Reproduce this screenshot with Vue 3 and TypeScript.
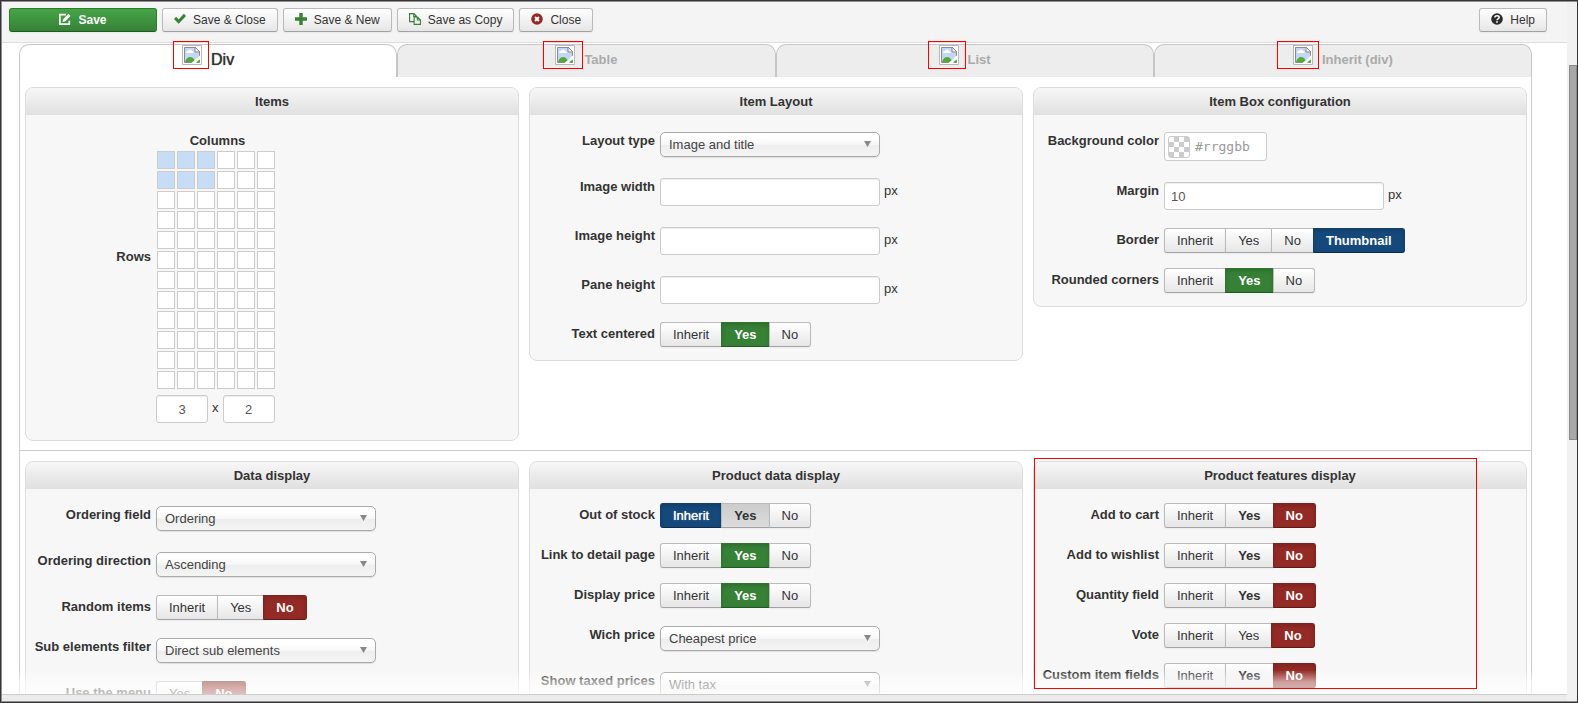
<script setup lang="ts">
import { reactive, ref } from 'vue'

type Kind = 'toggle' | 'select' | 'text' | 'color'
interface Field {
  id: string
  label: string
  kind: Kind
  options?: string[]
  value: string
  /** Options whose caption is printed in bold while not necessarily chosen */
  bold?: string[]
  /** Options drawn in the pressed grey state */
  pressed?: string[]
}
interface Panel {
  title: string
  marked?: boolean
  fields: Field[]
}

const iyn = ['Inherit', 'Yes', 'No']

const tabs = [
  { name: 'Div', left: 9, right: 7 },
  { name: 'Table', left: 12, right: 8 },
  { name: 'List', left: 11, right: 7 },
  { name: 'Inherit (div)', left: 16, right: 6 },
]
const activeTab = ref('Div')

const columns = ref(3)
const rows = ref(2)
const gridColumns = 6
const gridRows = 12

const upper = reactive<Panel[]>([
  {
    title: 'Item Layout',
    fields: [
      { id: 'layout', label: 'Layout type', kind: 'select', options: ['Image and title', 'Title', 'Image'], value: 'Image and title' },
      { id: 'imgw', label: 'Image width', kind: 'text', value: '' },
      { id: 'imgh', label: 'Image height', kind: 'text', value: '' },
      { id: 'paneh', label: 'Pane height', kind: 'text', value: '' },
      { id: 'center', label: 'Text centered', kind: 'toggle', options: iyn, value: 'Yes', bold: ['Yes'] },
    ],
  },
  {
    title: 'Item Box configuration',
    fields: [
      { id: 'bg', label: 'Background color', kind: 'color', value: '' },
      { id: 'margin', label: 'Margin', kind: 'text', value: '10' },
      { id: 'border', label: 'Border', kind: 'toggle', options: [...iyn, 'Thumbnail'], value: 'Thumbnail', bold: ['Thumbnail'] },
      { id: 'round', label: 'Rounded corners', kind: 'toggle', options: iyn, value: 'Yes', bold: ['Yes'] },
    ],
  },
])

const lower = reactive<Panel[]>([
  {
    title: 'Data display',
    fields: [
      { id: 'order', label: 'Ordering field', kind: 'select', options: ['Ordering', 'Name', 'Price'], value: 'Ordering' },
      { id: 'dir', label: 'Ordering direction', kind: 'select', options: ['Ascending', 'Descending'], value: 'Ascending' },
      { id: 'random', label: 'Random items', kind: 'toggle', options: iyn, value: 'No', bold: ['No'] },
      { id: 'sub', label: 'Sub elements filter', kind: 'select', options: ['Direct sub elements', 'All sub elements'], value: 'Direct sub elements' },
      { id: 'menu', label: 'Use the menu', kind: 'toggle', options: ['Yes', 'No'], value: 'No', bold: ['No'] },
    ],
  },
  {
    title: 'Product data display',
    fields: [
      { id: 'stock', label: 'Out of stock', kind: 'toggle', options: iyn, value: 'Inherit', bold: ['Yes'], pressed: ['Yes'] },
      { id: 'link', label: 'Link to detail page', kind: 'toggle', options: iyn, value: 'Yes', bold: ['Yes'] },
      { id: 'price', label: 'Display price', kind: 'toggle', options: iyn, value: 'Yes', bold: ['Yes'] },
      { id: 'which', label: 'Wich price', kind: 'select', options: ['Cheapest price', 'Unit price'], value: 'Cheapest price' },
      { id: 'tax', label: 'Show taxed prices', kind: 'select', options: ['With tax', 'Without tax'], value: 'With tax' },
    ],
  },
  {
    title: 'Product features display',
    marked: true,
    fields: [
      { id: 'cart', label: 'Add to cart', kind: 'toggle', options: iyn, value: 'No', bold: ['Yes', 'No'] },
      { id: 'wish', label: 'Add to wishlist', kind: 'toggle', options: iyn, value: 'No', bold: ['Yes', 'No'] },
      { id: 'qty', label: 'Quantity field', kind: 'toggle', options: iyn, value: 'No', bold: ['Yes', 'No'] },
      { id: 'vote', label: 'Vote', kind: 'toggle', options: iyn, value: 'No', bold: ['No'] },
      { id: 'custom', label: 'Custom item fields', kind: 'toggle', options: iyn, value: 'No', bold: ['Yes', 'No'] },
    ],
  },
])

function toneOf(option: string): string {
  if (option === 'Yes') return 'green'
  if (option === 'No') return 'red'
  return 'blue'
}

function optionClass(field: Field, option: string) {
  return [
    field.value === option ? toneOf(option) : '',
    { bold: field.bold?.includes(option), pressed: field.pressed?.includes(option) && field.value !== option },
  ]
}

function isFilled(index: number): boolean {
  const i = index - 1
  return i % gridColumns < columns.value && Math.floor(i / gridColumns) < rows.value
}

function pick(index: number) {
  columns.value = ((index - 1) % gridColumns) + 1
  rows.value = Math.floor((index - 1) / gridColumns) + 1
}
</script>

<template>
  <div class="window">
    <div class="view">
      <header class="toolbar">
        <button type="button" class="btn save">
          <svg viewBox="0 0 14 14"><path d="M12 9v4H1V2h7" fill="none" stroke="#fff" stroke-width="2" /><path d="M4 10.500l1-3.500 6-6 2.500 2.500-6 6z" fill="#fff" /></svg>
          Save
        </button>
        <button type="button" class="btn">
          <svg viewBox="0 0 14 14"><path d="M0 7l2.500-2.500L5.500 7.500 11.500 1 14 3.500 5.500 12.500z" fill="#378137" /></svg>
          Save &amp; Close
        </button>
        <button type="button" class="btn">
          <svg viewBox="0 0 14 14"><path d="M5 0h4v5h5v4H9v5H5V9H0V5h5z" fill="#378137" /></svg>
          Save &amp; New
        </button>
        <button type="button" class="btn">
          <svg viewBox="0 0 14 14"><path d="M5.500 10H.7V.7h5l3 3v1M5.500.7v3.300h3M6 4.700h4l3.300 3.300v5.300H6zM9.700 4.700v3.500h3.500" fill="none" stroke="#378137" stroke-width="1.300" /></svg>
          Save as Copy
        </button>
        <button type="button" class="btn">
          <svg viewBox="0 0 14 14"><circle cx="7" cy="7" r="6.800" fill="#942a25" /><path d="M4.700 4.700l4.600 4.600M9.300 4.700L4.700 9.300" stroke="#fff" stroke-width="2.200" /></svg>
          Close
        </button>
        <button type="button" class="btn help">
          <svg viewBox="0 0 14 14"><circle cx="7" cy="7" r="6.800" fill="#2b2b2b" /><path d="M4.500 5.200C4.500 2.700 9.500 2.700 9.500 5.200C9.500 6.800 7 6.700 7 8.600" fill="none" stroke="#fff" stroke-width="1.800" /><path d="M6 9.600h2v1.800H6z" fill="#fff" /></svg>
          Help
        </button>
      </header>

      <main class="content">
        <nav class="tabs" role="tablist">
          <button
            v-for="tab in tabs"
            :key="tab.name"
            type="button"
            role="tab"
            class="tab"
            :class="{ active: tab.name === activeTab }"
            :aria-selected="tab.name === activeTab"
            @click="activeTab = tab.name"
          >
            <span class="picture">
              <svg viewBox="0 0 20 20">
                <path d="M.5.5h19v19H.5z" fill="#fff" stroke="#b9b9b9" />
                <path d="M2.500 2.500h11l4 4v11h-15z" fill="#c5d7f4" stroke="#8b8b8b" />
                <path d="M4 8c0-2 2-2 2-2 1-2 4-1 4 0 2 0 2 2 1 2z" fill="#fff" />
                <path d="M3 17c2-7 8-6 10-1v1z" fill="#50ab34" />
                <path d="M13 2v5h5z" fill="#eee" stroke="#8b8b8b" />
                <path d="M9 18.500L18.500 10v4L14 18.500z" fill="#fff" />
                <path d="M14 17.500l3.500-3v3z" fill="#50ab34" />
              </svg>
              <span class="mark" :style="{ left: -tab.left + 'px', right: -tab.right + 'px' }"></span>
            </span>
            <span>{{ tab.name }}</span>
          </button>
        </nav>

        <div class="sheet">
          <div class="panels">
            <section class="panel">
              <h2>Items</h2>
              <div class="matrix">
                <span class="caption">Columns</span>
                <span class="side">Rows</span>
                <div class="cells">
                  <button
                    v-for="n in gridColumns * gridRows"
                    :key="n"
                    type="button"
                    class="cell"
                    :class="{ filled: isFilled(n) }"
                    :aria-label="`Cell ${n}`"
                    @click="pick(n)"
                  ></button>
                </div>
                <div class="counts">
                  <input v-model.number="columns" type="text" aria-label="Columns" />
                  <span>x</span>
                  <input v-model.number="rows" type="text" aria-label="Rows" />
                </div>
              </div>
            </section>
            <template v-for="(group, g) in [upper, lower]" :key="g">
              <hr v-if="g === 1" />
              <section v-for="panel in group" :key="panel.title" class="panel">
                <h2>{{ panel.title }}</h2>
                <div class="fields">
                  <div v-for="f in panel.fields" :key="f.id" class="field">
                    <span v-if="f.kind === 'toggle'" :id="f.id" class="label">{{ f.label }}</span>
                    <label v-else class="label" :for="f.id">{{ f.label }}</label>

                    <div v-if="f.kind === 'toggle'" class="toggle" role="group" :aria-labelledby="f.id">
                      <button
                        v-for="o in f.options"
                        :key="o"
                        type="button"
                        :class="optionClass(f, o)"
                        :aria-pressed="f.value === o"
                        @click="f.value = o"
                      >{{ o }}</button>
                    </div>
                    <div v-else-if="f.kind === 'select'" class="select">
                      <select :id="f.id" v-model="f.value">
                        <option v-for="o in f.options" :key="o">{{ o }}</option>
                      </select>
                      <svg viewBox="0 0 8 6"><path d="M1 0h7L4.500 6z" fill="#888" /></svg>
                    </div>
                    <div v-else-if="f.kind === 'text'" class="measure">
                      <input :id="f.id" v-model="f.value" type="text" />
                      <span>px</span>
                    </div>
                    <div v-else class="color">
                      <span class="swatch"></span>
                      <input :id="f.id" v-model="f.value" type="text" placeholder="#rrggbb" />
                    </div>
                  </div>
                </div>
                <span v-if="panel.marked" class="mark region"></span>
              </section>
            </template>
          </div>
        </div>
        <div class="fade"></div>
      </main>

      <footer class="strip"></footer>
    </div>
    <div class="scroll"><div class="thumb"></div></div>
  </div>
</template>

<style>
body {
  margin: 0;
}
</style>

<style scoped>
* {
  box-sizing: border-box;
}

.window {
  display: flex;
  height: 100vh;
  overflow: hidden;
  border: 1px solid #353337;
  box-shadow: inset 1px 1px 0 #8f8f8f, inset 0 -1px 0 #8f8f8f;
  padding: 1px 0 1px 1px;
  background: #fff;
  color: #333;
  font-family: "Liberation Sans", Arial, sans-serif;
  font-size: 13px;
  line-height: 18px;
}

button,
input,
select {
  margin: 0;
  font: inherit;
  color: inherit;
}

button {
  cursor: pointer;
}

.view {
  display: flex;
  flex: 1;
  flex-direction: column;
  min-width: 0;
}

.toolbar {
  display: flex;
  flex: none;
  gap: 5px;
  padding: 6px 20px 10px 7px;
  border-bottom: 1px solid #ddd;
  background: #f4f4f4;
}

.btn {
  display: flex;
  align-items: center;
  justify-content: center;
  gap: 7px;
  height: 24px;
  padding: 0 11px;
  border: 1px solid #bbb;
  border-bottom-color: #a2a2a2;
  border-radius: 3px;
  background: linear-gradient(#fff, #e6e6e6);
  box-shadow: 0 1px 2px rgba(0, 0, 0, 0.05);
  font-size: 12px;
}

.btn svg {
  width: 12px;
  height: 12px;
  margin-bottom: 2px;
}

.btn.save {
  width: 148px;
  border-color: #2f7a2f;
  border-bottom-color: #1f5a1f;
  background: linear-gradient(#46a546, #378137);
  color: #fff;
  font-weight: bold;
}

.btn.help {
  margin-left: auto;
}

.content {
  position: relative;
  flex: 1;
  min-height: 0;
  overflow: hidden;
  margin-top: -2px;
  padding: 3px 35px 0 17px;
}

.tabs {
  display: flex;
}

.tab {
  display: flex;
  flex: 1;
  align-items: flex-start;
  justify-content: center;
  gap: 9px;
  height: 33px;
  padding: 0;
  border: 1px solid #c6c6c6;
  border-bottom: 0;
  border-radius: 10px 10px 0 0;
  background: #ededed;
  color: #aaa;
  font-weight: bold;
  line-height: 30px;
}

.tab.active {
  background: #fff;
  color: #333;
  font-size: 16px;
  font-weight: normal;
  text-shadow: 0 0 1px #333;
}

.picture {
  position: relative;
  width: 20px;
  height: 20px;
}

.picture svg {
  display: block;
  width: 20px;
  height: 20px;
}

.mark {
  position: absolute;
  z-index: 2;
  top: -4px;
  bottom: -4px;
  border: 1px solid #f00;
  pointer-events: none;
}

.sheet {
  padding: 10px 4px 0 5px;
  border: 1px solid #ccc;
  border-width: 0 1px;
}

.panels {
  display: grid;
  grid-template-columns: repeat(3, 1fr);
  align-items: start;
  column-gap: 10px;
}

hr {
  grid-column: 1 / -1;
  width: calc(100% + 9px);
  margin: 9px -4px 10px -5px;
  border: 0;
  border-top: 1px solid #ccc;
}

.panel {
  position: relative;
  border: 1px solid #ddd;
  border-radius: 8px;
  background: #f7f7f7;
}

.panel h2 {
  margin: 0;
  padding: 5px 0 4px;
  border-radius: 7px 7px 0 0;
  background: linear-gradient(#f7f7f7, #e0e0e0);
  font-size: 13px;
  line-height: 18px;
  text-align: center;
}

.fields {
  display: flex;
  flex-direction: column;
  gap: 21px;
  padding: 17px 0 16px;
}

.field {
  display: flex;
  align-items: flex-start;
  gap: 5px;
}

.label {
  flex: none;
  width: 125px;
  height: 18px;
  font-weight: bold;
  text-align: right;
  white-space: nowrap;
}

.toggle {
  display: flex;
  margin: -3px 0;
}

.toggle button {
  height: 25px;
  padding: 0 12px;
  border: 1px solid #bbb;
  border-bottom-color: #a2a2a2;
  background: linear-gradient(#fff, #e6e6e6);
  box-shadow: 0 1px 2px rgba(0, 0, 0, 0.05);
}

.toggle button + button {
  margin-left: -1px;
}

.toggle button:first-child {
  border-radius: 3px 0 0 3px;
}

.toggle button:last-child {
  border-radius: 0 3px 3px 0;
}

.toggle .bold {
  font-weight: bold;
}

.toggle .pressed {
  background: linear-gradient(#ccc, #dcdcdc);
}

.toggle .green,
.toggle .red,
.toggle .blue {
  box-shadow: inset 0 2px 4px rgba(0, 0, 0, 0.15);
  color: #fff;
}

.toggle .green {
  border-color: #2f742f #2f742f #1f5a1f;
  background: #378137;
}

.toggle .red {
  border-color: #802420 #802420 #601a17;
  background: #942a25;
}

.toggle .blue {
  border-color: #133f6c #133f6c #0b2c4e;
  background: #15497c;
}

.toggle .blue:not(.bold) {
  text-shadow: 0 0 1px #fff;
}

.select {
  position: relative;
  width: 220px;
}

.select select {
  display: block;
  width: 100%;
  height: 25px;
  padding: 0 24px 0 8px;
  appearance: none;
  border: 1px solid #aaa;
  border-radius: 5px;
  background: linear-gradient(#fff 20%, #f6f6f6 50%, #eee 52%, #f4f4f4);
  box-shadow: 0 1px 1px rgba(0, 0, 0, 0.1);
  color: #444;
}

.select svg {
  position: absolute;
  top: 9px;
  right: 9px;
  width: 8px;
  height: 6px;
  pointer-events: none;
}

.measure {
  display: flex;
  align-items: center;
  gap: 4px;
}

.measure span {
  padding-bottom: 2px;
}

input {
  height: 28px;
  padding: 0 6px;
  border: 1px solid #ccc;
  border-radius: 3px;
  background: #fff;
  box-shadow: inset 0 1px 1px rgba(0, 0, 0, 0.075);
  color: #555;
}

.measure input {
  width: 220px;
}

.color {
  display: flex;
  align-items: center;
  gap: 5px;
  width: 103px;
  height: 29px;
  padding: 0 3px;
  border: 1px solid #ccc;
  border-radius: 3px;
  background: #fff;
}

.color input {
  flex: 1;
  min-width: 0;
  height: 24px;
  padding: 0;
  border: 0;
  box-shadow: none;
  font-family: "DejaVu Sans Mono", monospace;
}

.color input::placeholder {
  color: #999;
}

.swatch {
  flex: none;
  width: 22px;
  height: 22px;
  border: 1px solid #ccc;
  border-radius: 3px;
  background: repeating-conic-gradient(#ccc 0 25%, #fff 0 50%) 0 0 / 10px 10px;
}

.matrix {
  display: grid;
  grid-template-columns: 125px 120px;
  column-gap: 5px;
  padding: 17px 0;
}

.caption {
  grid-column: 2;
  padding-left: 3px;
  font-weight: bold;
  text-align: center;
}

.side {
  align-self: center;
  padding-bottom: 26px;
  font-weight: bold;
  text-align: right;
}

.cells {
  display: grid;
  grid-template-columns: repeat(6, 18px);
  grid-auto-rows: 18px;
  gap: 2px;
  padding: 1px;
}

.cell {
  padding: 0;
  border: 1px solid #ccc;
  background: #fff;
}

.cell.filled {
  background: #c7ddf5;
}

.counts {
  display: flex;
  grid-column: 2;
  gap: 4px;
  margin-top: 5px;
  line-height: 26px;
}

.counts input {
  width: 52px;
  text-align: center;
}

.region {
  top: -4px;
  right: 49px;
  bottom: auto;
  left: 0;
  height: 231px;
}

.fade {
  position: absolute;
  z-index: 1;
  right: 0;
  bottom: 0;
  left: 0;
  height: 24px;
  background: linear-gradient(rgba(255, 255, 255, 0), rgba(255, 255, 255, 0.55) 50%, rgba(255, 255, 255, 0.7));
  pointer-events: none;
}

.strip {
  flex: none;
  height: 7px;
  border-top: 1px solid #ccc;
  background: #ebebeb;
}

.scroll {
  flex: none;
  width: 10px;
  padding: 63px 0 0 2px;
  background: #f1f1f1;
}

.thumb {
  height: 59%;
  border: 1px solid #8a8a8a;
  background: #a8a8a8;
}
</style>
